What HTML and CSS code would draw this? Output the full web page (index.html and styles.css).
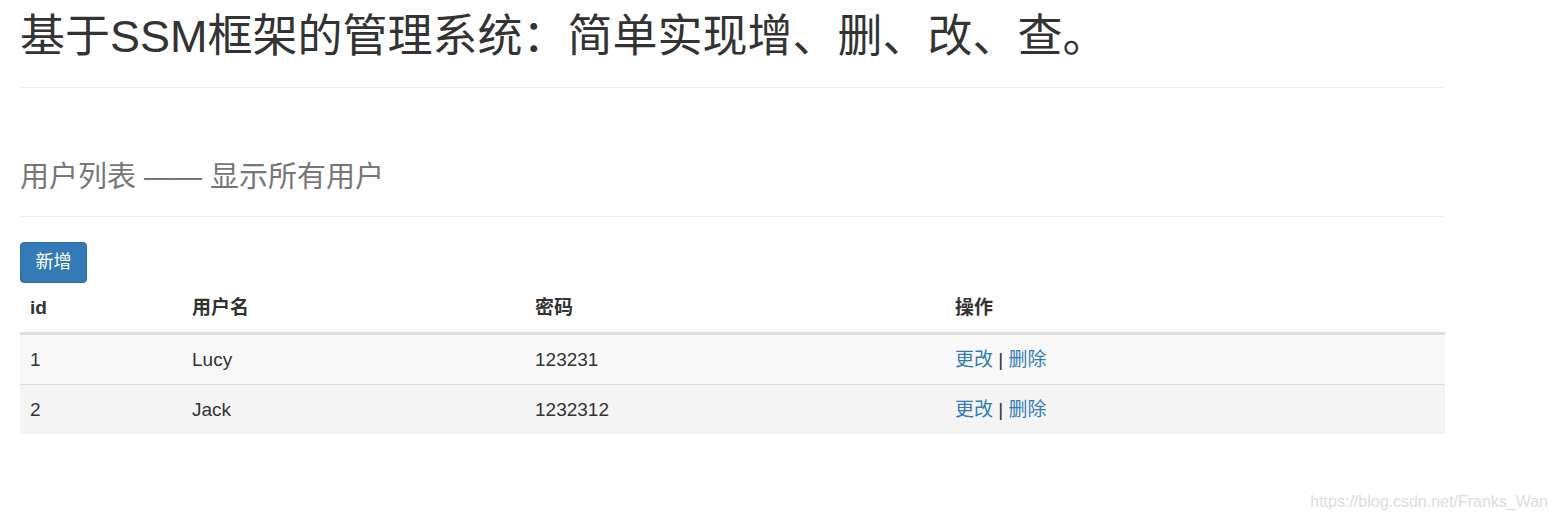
FILE: index.html
```html
<!DOCTYPE html>
<html lang="zh-CN">
<head>
<meta charset="utf-8">
<title>SSM 管理系统</title>
<link rel="stylesheet" href="styles.css">
</head>
<body>
<div class="container">
  <header class="page-title">
    <h1>基于SSM框架的管理系统：简单实现增、删、改、查。</h1>
  </header>
  <section class="page-sub">
    <h2>用户列表 —— 显示所有用户</h2>
  </section>
  <div class="toolbar">
    <button class="btn-primary" type="button">新增</button>
  </div>
  <table class="user-table">
    <thead>
      <tr>
        <th class="col-id">id</th>
        <th class="col-name">用户名</th>
        <th class="col-pwd">密码</th>
        <th>操作</th>
      </tr>
    </thead>
    <tbody>
      <tr class="row-odd">
        <td>1</td>
        <td>Lucy</td>
        <td>123231</td>
        <td><a href="#">更改</a> | <a href="#">删除</a></td>
      </tr>
      <tr class="row-even">
        <td>2</td>
        <td>Jack</td>
        <td>1232312</td>
        <td><a href="#">更改</a> | <a href="#">删除</a></td>
      </tr>
    </tbody>
  </table>
</div>
<div class="watermark">https://blog.csdn.net/Franks_Wan</div>
</body>
</html>
```
FILE: styles.css
```css
html, body {
  margin: 0;
  padding: 0;
  background: #fff;
}
body {
  font-family: "Liberation Sans", Arial, "Noto Sans CJK SC", sans-serif;
  color: #333;
  font-size: 19px;
  height: 522px;
  position: relative;
  overflow: hidden;
}
.container {
  width: 1425px;
  margin-left: 20px;
}
.page-title {
  padding-top: 12px;
  border-bottom: 1px solid #eee;
  padding-bottom: 26px;
}
.page-title h1 {
  margin: 0;
  font-size: 45px;
  font-weight: 400;
  line-height: 49px;
  color: #333;
}
.page-sub {
  padding-top: 73px;
  padding-bottom: 23px;
  border-bottom: 1px solid #eee;
}
.page-sub h2 {
  margin: 0;
  font-size: 29px;
  font-weight: 400;
  line-height: 32px;
  color: #777;
}
.toolbar {
  padding-top: 25px;
  display: flex;
}
.btn-primary {
  height: 41px;
  width: 67px;
  padding: 0;
  font-family: inherit;
  font-size: 18px;
  line-height: 39px;
  color: #fff;
  background: #337ab7;
  border: 1px solid #2e6da4;
  border-radius: 4px;
}
.user-table {
  width: 1425px;
  border-collapse: collapse;
  border-spacing: 0;
}
.user-table th,
.user-table td {
  text-align: left;
  padding: 10px 10px;
  line-height: 29px;
  vertical-align: top;
}
.user-table th {
  font-weight: 700;
  padding-top: 10px;
  padding-bottom: 10px;
  border-bottom: 3px solid #ddd;
}
.user-table td {
  border-top: 1px solid #ddd;
}
.user-table tbody tr:first-child td {
  border-top: 0;
}
.col-id { width: 142px; }
.col-name { width: 323px; }
.col-pwd { width: 400px; }
.row-odd { background: #f8f8f8; }
.row-even { background: #f4f4f4; }
.user-table a {
  color: #337ab7;
  text-decoration: none;
}
.watermark {
  position: absolute;
  right: 10px;
  bottom: 11px;
  font-size: 16px;
  color: #dcdcdc;
  font-family: "Liberation Sans", Arial, sans-serif;
}
```
